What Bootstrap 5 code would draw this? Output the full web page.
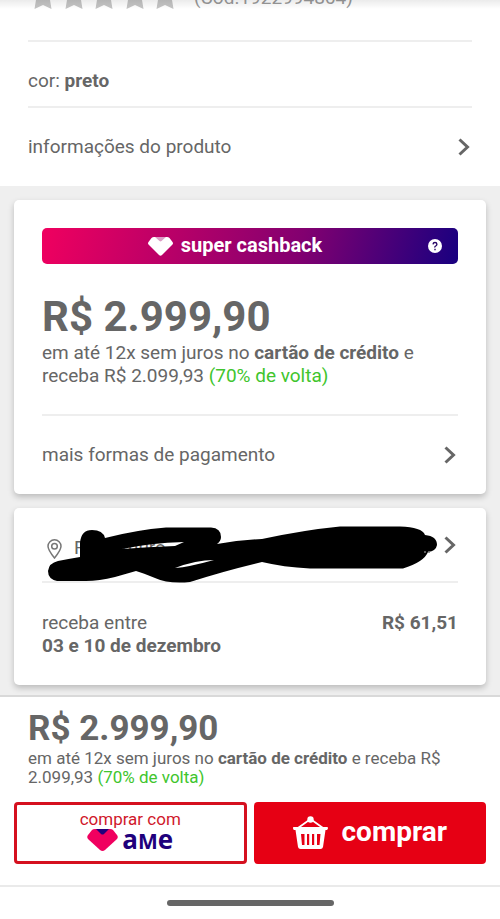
<!DOCTYPE html>
<html lang="pt-BR">
<head>
<meta charset="utf-8">
<meta name="viewport" content="width=device-width, initial-scale=1">
<title>Produto</title>
<link href="https://cdn.jsdelivr.net/npm/bootstrap@5.3.0/dist/css/bootstrap.min.css" rel="stylesheet">
<style>
body{font-family:Roboto,"Liberation Sans",sans-serif;font-size:19px;line-height:23px;color:#666;background:#efefef}
.top-info{padding:0 28px;position:relative}
.top-info::before{content:"";position:absolute;top:0;left:0;right:0;height:9px;background:linear-gradient(rgba(0,0,0,.08),transparent)}
.rating-clip{height:40px;overflow:hidden}
.rating-line{margin-top:-18px;color:#999;gap:10px;line-height:24px}
.row-link{color:#666;background:none;border:0;text-align:left;padding:0}
.rule{border-top:2px solid #eee}
.color-line{padding:27px 0 14px}
.info-link{padding:27px 2px 28px 0}
.panel{border:0;border-radius:5px;padding:28px;box-shadow:0 3px 6px rgba(0,0,0,.22)}
.panels{padding:14px 14px 9px;gap:14px}
.cashback{height:36px;border-radius:5px;color:#fff;padding-right:30px;background:linear-gradient(105deg,#f0005f,#820070 62%,#180080)}
.cashback strong{font-size:20px;margin-top:-2px}
.help{right:16px;top:11px}
.price-main{font-size:42px;line-height:48px;margin:29px 0 0}
.volta{color:#40c52d}
.pay-rule{margin-top:27px}
.pay-link{padding:27px 2px 0 0}
.ship{padding-top:23px;padding-bottom:28px}
.address{padding:0 2px 22px 5px}
.address-text{gap:36px;padding-left:12px}
.scribble{top:-11px;left:0;width:100%}
.ship-date{padding-top:28px}
.buy-bar{background:#fff;border-top:2px solid #d9d9d9}
.buy-info{padding:11px 28px 15px;font-size:17px;line-height:19px}
.price-bar{font-size:35px;line-height:41px;margin:0}
.actions{padding:0 14px 21px;gap:7px}
.actions .btn{height:62px;border-radius:4px;flex:1 1 0;padding:4px 0}
.actions .btn-ame{border:3px solid #d5101f;background:#fff;color:#d0182b;font-size:17px;line-height:20px}
.ame-word{font-family:"Open Sans",sans-serif;font-weight:700;font-size:26px;line-height:18px;color:#20007c}
.ame-word span{font-size:21px}
.actions .btn-buy{border:3px solid #e60014;background:#e60014;color:#fff;font-size:28px;font-weight:700;gap:14px;line-height:32px}
.buy-label{margin-top:-3px}
.gesture{height:34px;border-top:2px solid #eaeaea}
.gesture span{width:167px;height:6px;border-radius:3px;background:#666}
</style>
</head>
<body>
<div class="d-flex flex-column min-vh-100">
<main class="flex-grow-1">
  <section class="top-info bg-white">
    <div class="rating-clip">
      <div class="rating-line d-flex align-items-center">
        <svg width="156" height="32" viewBox="0 0 156 32" fill="#c4c4c4" aria-label="Avaliação"><defs><path id="star" d="M15 2l3.400 9 8.600.8-5 6L23.500 27 15 23 6.500 27l1.500-9.200-5-6 8.600-.8z"/></defs><use href="#star"/><use href="#star" x="31"/><use href="#star" x="61"/><use href="#star" x="92"/><use href="#star" x="122"/></svg>
        <span>(Cod.1922994864)</span>
      </div>
    </div>
    <div class="rule color-line">cor: <strong>preto</strong></div>
    <div class="rule"></div>
    <button type="button" class="row-link info-link w-100 d-flex justify-content-between align-items-center"><span>informações do produto</span>
      <svg width="12" height="18" viewBox="0 0 12 18" fill="none" stroke="#666" stroke-width="3"><path d="M1.500 1.500L9.500 9l-8 7.500"/></svg></button>
  </section>
  <div class="panels d-flex flex-column">
    <section class="card panel">
      <div class="cashback position-relative d-flex align-items-center justify-content-center">
        <svg class="me-2" width="25" height="19" viewBox="0 0 25 19"><path fill="#fff" d="M6 0h13q1.500 0 2.500 1l3 4q1 1.500-.5 3L14 18q-1.500 1.500-3 0L1 8Q-.500 6.500.5 5l3-4Q4.500 0 6 0z"/><path fill="#dc9bc5" d="M7 0h11l-4.500 4q-1 .8-2 0z"/></svg>
        <strong>super cashback</strong>
        <svg class="help position-absolute" width="14" height="14" viewBox="0 0 14 14"><circle cx="7" cy="7" r="7" fill="#fff"/><path d="M5 5.300Q5.200 3.500 7 3.500t1.900 1.700Q8.900 6.300 7.700 7T7 8.500M7 9.800v1.400" fill="none" stroke="#2a0868" stroke-width="1.400"/></svg>
      </div>
      <h1 class="price-main fw-bold">R$ 2.999,90</h1>
      <div>em até 12x sem juros no <strong>cartão de crédito</strong> e receba R$ 2.099,93 <span class="volta">(70% de volta)</span></div>
      <div class="rule pay-rule"></div>
      <button type="button" class="row-link pay-link w-100 d-flex justify-content-between align-items-center"><span>mais formas de pagamento</span>
        <svg width="12" height="18" viewBox="0 0 12 18" fill="none" stroke="#666" stroke-width="3"><path d="M1.500 1.500L9.500 9l-8 7.500"/></svg></button>
    </section>
    <section class="card panel ship">
      <div class="position-relative">
        <button type="button" class="row-link address w-100 d-flex align-items-center">
          <svg class="mt-2" width="15" height="20" viewBox="0 0 15 20" fill="none" stroke="#777" stroke-width="1.500"><path d="M7.500 19Q1 11 1 7.300a6.500 6.500 0 0 1 13 0Q14 11 7.500 19z"/><circle cx="7.500" cy="7.300" r="2.800"/></svg>
          <span class="address-text d-flex flex-grow-1 mt-1"><span>R</span><span>muro</span></span>
          <svg width="12" height="18" viewBox="0 0 12 18" fill="none" stroke="#666" stroke-width="3"><path d="M1.500 1.500L9.500 9l-8 7.500"/></svg>
        </button>
        <svg class="scribble position-absolute pe-none" viewBox="42 520 416 66"><path fill="#000" fill-rule="evenodd" d="M58 561Q68 559 80 557V543Q81 530 92 530Q103 530 105 538Q136 530 166 527.500H211Q221 528 221 537Q221 541 217 544Q239 540 262 539Q304 530 340 526.500H400Q422 527 425 535Q437 536 437 545Q436 551 428 552Q424 562 403 568.500H310Q283 567 262 562Q224 571 190 582Q168 584 155 578Q143 573 136 571L115 577Q99 581 86 581H57Q48 579 48 571Q49 563 58 561zM122 549Q150 543 184 542L175 546Q148 547 122 549zM175 568Q189 567 214 560Q196 560 175 568z"/><path d="M425 551v2m4-2v2" stroke="#777" stroke-width="1.500"/></svg>
      </div>
      <div class="rule ship-date d-flex justify-content-between"><div>receba entre<br><strong>03 e 10 de dezembro</strong></div><strong>R$ 61,51</strong></div>
    </section>
  </div>
</main>
<footer class="buy-bar sticky-bottom">
  <div class="buy-info"><p class="price-bar fw-bold">R$ 2.999,90</p>em até 12x sem juros no <strong>cartão de crédito</strong> e receba R$ 2.099,93 <span class="volta">(70% de volta)</span></div>
  <div class="actions d-flex">
    <button type="button" class="btn btn-ame d-flex flex-column align-items-center"><span>comprar com</span>
      <span class="d-flex align-items-center gap-1"><svg width="31" height="22" viewBox="0 0 31 22"><path fill="#f0005f" d="M8 0h15q2 0 3 1l4 5q1.500 2 0 4L18 21q-2.500 2-5 0L1 10q-1.500-2 0-4l4-5q1-1 3-1z"/><path fill="#20007c" d="M9 0h13l-5 5q-1.500 1-3 0z"/></svg><span class="ame-word">a<span>M</span>e</span></span></button>
    <button type="button" class="btn btn-buy d-flex align-items-center justify-content-center">
      <svg width="35" height="34" viewBox="0 0 35 34"><path d="M5 12L17.500 3 30 12" fill="none" stroke="#fff" stroke-width="1.800"/><circle cx="17.500" cy="3.500" r="3.200" fill="#fff"/><path fill="#fff" fill-rule="evenodd" d="M1 11h33q1 0 1 1t-1 2h-1.500L30 31q-.5 2-2.500 2h-20Q5.500 33 5 31L2.500 14H1q-1-.5-1-2t1-1zM8 18l1 11h2.500V18zM14 18v11h2.200V18zM19 18v11h2.200V18zM24 18v11h2.500l1-11z"/></svg>
      <span class="buy-label">comprar</span></button>
  </div>
  <div class="gesture d-flex justify-content-center align-items-center"><span></span></div>
</footer>
</div>
<script src="https://cdn.jsdelivr.net/npm/bootstrap@5.3.0/dist/js/bootstrap.bundle.min.js"></script>
</body>
</html>
